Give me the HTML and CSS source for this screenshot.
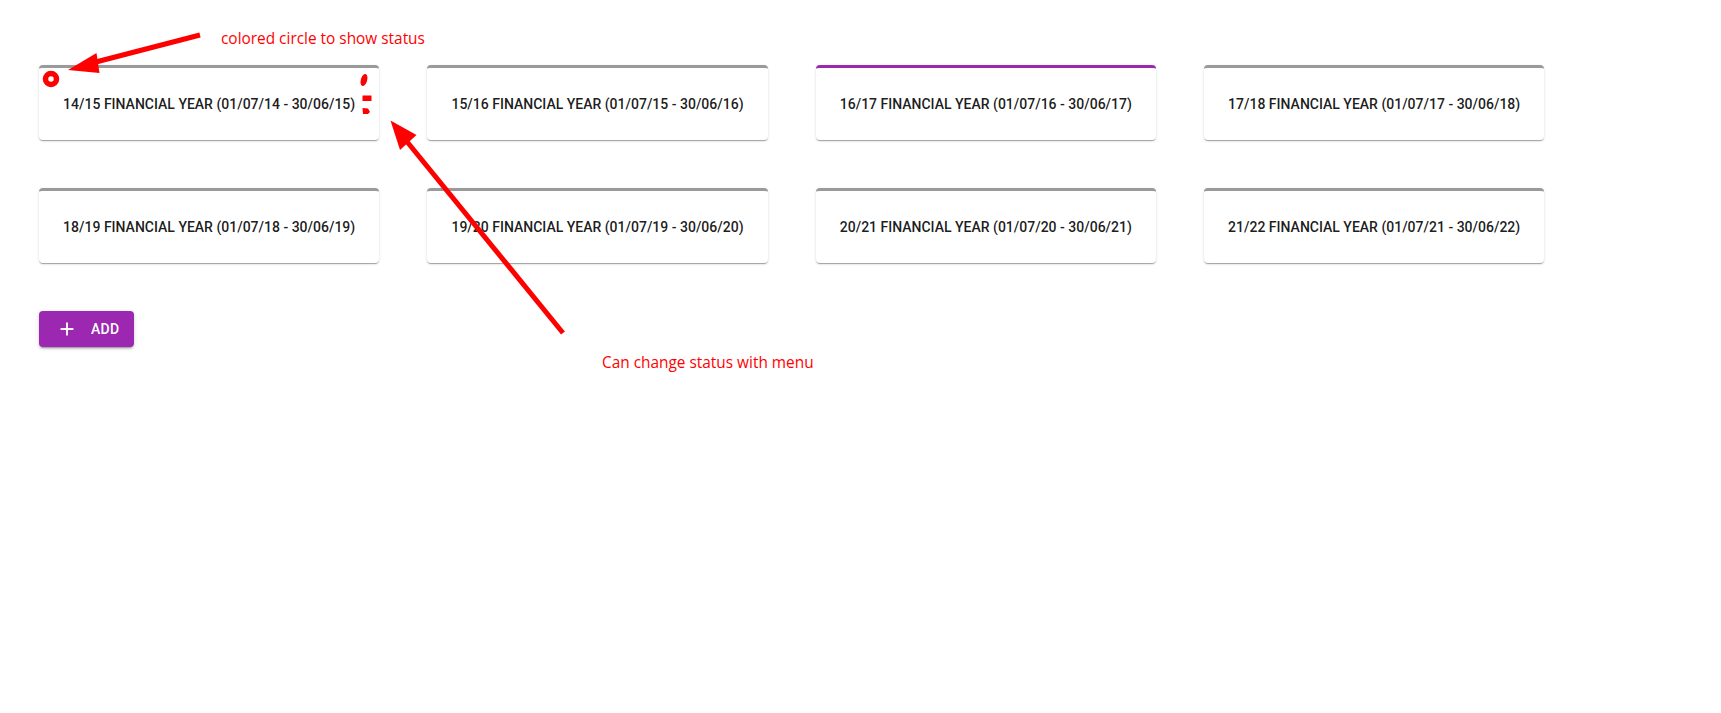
FILE: index.html
```html
<!DOCTYPE html>
<html lang="en">
<head>
<meta charset="utf-8">
<title>Financial years</title>
<link rel="stylesheet" href="styles.css">
</head>
<body>
<main class="page">
  <section class="years">
    <div class="year-card"><span class="year-title">14/15 FINANCIAL YEAR (01/07/14 - 30/06/15)</span></div>
    <div class="year-card"><span class="year-title">15/16 FINANCIAL YEAR (01/07/15 - 30/06/16)</span></div>
    <div class="year-card year-card--active"><span class="year-title">16/17 FINANCIAL YEAR (01/07/16 - 30/06/17)</span></div>
    <div class="year-card"><span class="year-title">17/18 FINANCIAL YEAR (01/07/17 - 30/06/18)</span></div>
    <div class="year-card"><span class="year-title">18/19 FINANCIAL YEAR (01/07/18 - 30/06/19)</span></div>
    <div class="year-card"><span class="year-title">19/20 FINANCIAL YEAR (01/07/19 - 30/06/20)</span></div>
    <div class="year-card"><span class="year-title">20/21 FINANCIAL YEAR (01/07/20 - 30/06/21)</span></div>
    <div class="year-card"><span class="year-title">21/22 FINANCIAL YEAR (01/07/21 - 30/06/22)</span></div>
  </section>
  <div class="actions">
    <button class="add-btn" type="button">
      <svg class="add-icon" viewBox="0 0 24 24" aria-hidden="true"><path d="M19 13h-6v6h-2v-6H5v-2h6V5h2v6h6v2z" fill="currentColor"/></svg>
      <span>Add</span>
    </button>
  </div>
</main>

<svg class="annotations" width="1721" height="713" viewBox="0 0 1721 713" aria-hidden="true">
  <g fill="#ff0000" stroke="none">
    <line x1="200" y1="35" x2="92" y2="63" stroke="#ff0000" stroke-width="5"/>
    <polygon points="68,70 96.5,53 99.5,73"/>
    <line x1="563" y1="333" x2="404" y2="138" stroke="#ff0000" stroke-width="5"/>
    <polygon points="390.5,120.5 416.5,135 400,150"/>
    <circle cx="51" cy="79" r="5.5" fill="none" stroke="#ff0000" stroke-width="5.5"/>
    <ellipse cx="364" cy="80" rx="3.2" ry="6.2" transform="rotate(15 364 80)"/>
    <rect x="362.5" y="95.5" width="9" height="5.5"/>
    <path d="M362.5 108 L368 108.5 L370 112 L368 114 L363 114 Z"/>
  </g>
</svg>
<div class="note note--circle">colored circle to show status</div>
<div class="note note--menu">Can change status with menu</div>
</body>
</html>
```

FILE: styles.css
```css
html, body {
  margin: 0;
  padding: 0;
  background: #ffffff;
}

body {
  position: relative;
  width: 1721px;
  height: 713px;
  overflow: hidden;
  font-family: Roboto, "Liberation Sans", sans-serif;
  color: rgba(0, 0, 0, 0.87);
}

.page {
  padding: 65px 0 0 39px;
}

.years {
  display: grid;
  grid-template-columns: repeat(4, 340.33px);
  column-gap: 48px;
  row-gap: 48px;
}

.year-card {
  box-sizing: border-box;
  height: 75px;
  border-top: 3px solid #9a9a9a;
  border-radius: 4px;
  background: #ffffff;
  box-shadow: 0px 2px 1px -1px rgba(0, 0, 0, 0.2),
              0px 1px 1px 0px rgba(0, 0, 0, 0.14),
              0px 1px 3px 0px rgba(0, 0, 0, 0.12);
  display: flex;
  align-items: center;
  justify-content: center;
}

.year-card--active {
  border-top-color: #9c27b0;
}

.year-title {
  font-size: 14px;
  font-weight: 500;
  line-height: 20px;
  white-space: nowrap;
  color: rgba(0, 0, 0, 0.9);
}

.actions {
  margin-top: 48px;
  display: flex;
}

.add-btn {
  display: inline-flex;
  align-items: center;
  height: 36px;
  padding: 0 15px 0 17px;
  border: 0;
  border-radius: 4px;
  background: #9c27b0;
  color: #ffffff;
  font-family: Roboto, "Liberation Sans", sans-serif;
  font-size: 14px;
  font-weight: 500;
  letter-spacing: 0.3px;
  text-transform: uppercase;
  box-shadow: 0px 3px 1px -2px rgba(0, 0, 0, 0.2),
              0px 2px 2px 0px rgba(0, 0, 0, 0.14),
              0px 1px 5px 0px rgba(0, 0, 0, 0.12);
  cursor: pointer;
}

.add-icon {
  width: 22px;
  height: 22px;
  margin-right: 13px;
}

.annotations {
  position: absolute;
  left: 0;
  top: 0;
  pointer-events: none;
}

.note {
  position: absolute;
  font-family: "Open Sans", "Noto Sans", sans-serif;
  font-size: 15.4px;
  line-height: 20px;
  color: #ff0000;
  white-space: nowrap;
}

.note--circle {
  left: 221px;
  top: 29px;
}

.note--menu {
  left: 602px;
  top: 353px;
}
```
